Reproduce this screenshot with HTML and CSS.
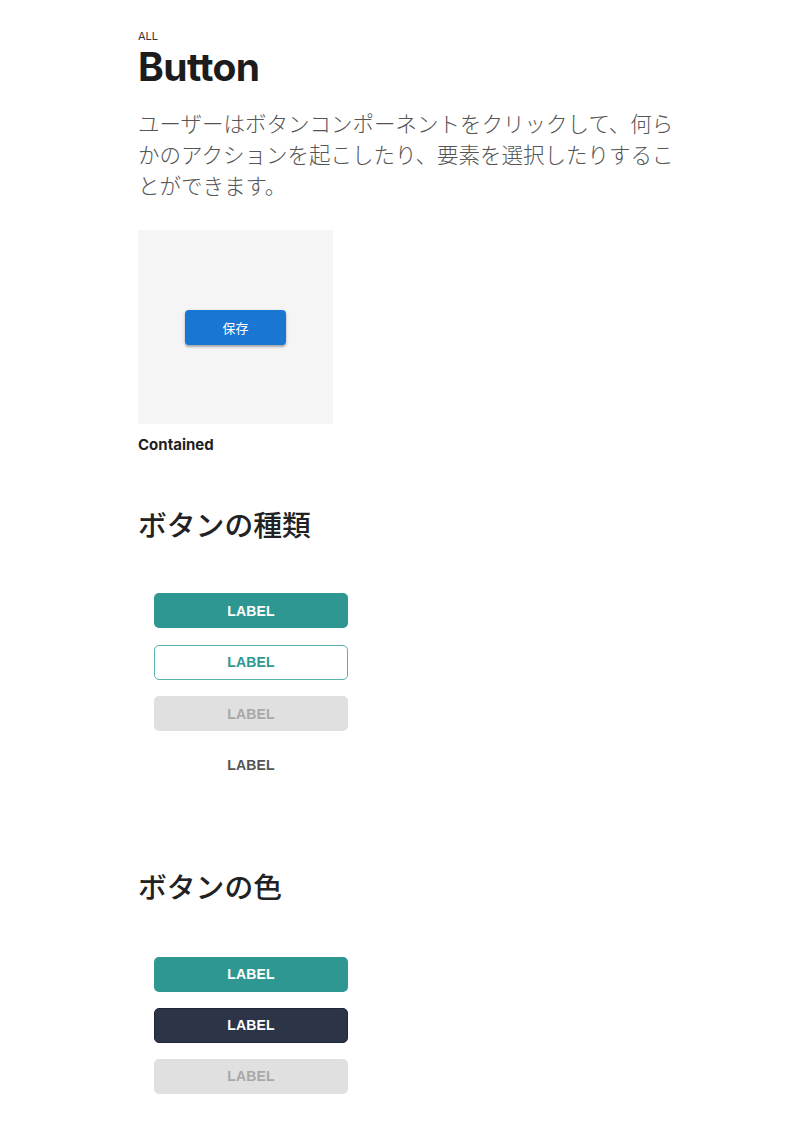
FILE: index.html
```html
<!DOCTYPE html>
<html lang="ja">
<head>
  <meta charset="UTF-8" />
  <meta name="viewport" content="width=device-width, initial-scale=1" />
  <title>Button</title>
  <link rel="stylesheet" href="styles.css">
</head>
<body>
  <div class="page">
    <div class="category">ALL</div>
    <h1 class="title">Button</h1>
    <p class="lead">ユーザーはボタンコンポーネントをクリックして、何らかのアクションを起こしたり、要素を選択したりすることができます。</p>

    <!-- プレビュー -->
    <div class="preview">
      <button class="btn-save">保存</button>
    </div>
    <div class="preview-label">Contained</div>

    <!-- ボタンの種類 -->
    <section class="section">
      <h2>ボタンの種類</h2>
      <div class="btn-list">
        <button class="btn btn-primary">LABEL</button>
        <button class="btn btn-outline">LABEL</button>
        <button class="btn btn-disabled">LABEL</button>
        <button class="btn btn-text">LABEL</button>
      </div>
    </section>

    <!-- ボタンの色 -->
    <section class="section section-colors">
      <h2>ボタンの色</h2>
      <div class="btn-list colors">
        <button class="btn btn-primary">LABEL</button>
        <button class="btn btn-dark">LABEL</button>
        <button class="btn btn-disabled">LABEL</button>
      </div>
    </section>
  </div>
</body>
</html>
```

FILE: styles.css
```css
* {
  box-sizing: border-box;
}
body {
  margin: 0;
  background: #ffffff;
  font-family: 'Inter', 'Noto Sans CJK JP', sans-serif;
  color: #1f1f1f;
}

.page {
  width: 540px;
  margin-left: 138px;
  padding-top: 29px;
}

.category {
  font-size: 11px;
  line-height: 14px;
  color: #333;
}

.title {
  margin: 0;
  font-size: 39px;
  line-height: 48px;
  font-weight: 700;
  letter-spacing: -0.6px;
  color: #1c1c1c;
}

.lead {
  margin: 16px 0 0;
  font-family: 'Noto Sans CJK JP', sans-serif;
  font-size: 21.5px;
  line-height: 31px;
  font-weight: 300;
  color: #555;
}

.preview {
  margin-top: 30px;
  width: 195px;
  height: 194px;
  background: #f5f5f5;
  display: flex;
  justify-content: center;
  align-items: center;
}

.btn-save {
  width: 101px;
  height: 35px;
  border: none;
  border-radius: 4px;
  background: #1976d2;
  color: #fff;
  font-family: 'Noto Sans CJK JP', sans-serif;
  font-size: 13px;
  box-shadow: 0 2px 2px rgba(0,0,0,0.25), 0 1px 4px rgba(0,0,0,0.12);
}

.preview-label {
  margin-top: 11px;
  font-size: 15px;
  line-height: 20px;
  font-weight: 700;
}

.section {
  margin-top: 49px;
}

.section-colors {
  margin-top: 67px;
}

.section h2 {
  margin: 0;
  font-family: 'Noto Sans CJK JP', sans-serif;
  font-size: 28.8px;
  line-height: 40px;
  font-weight: 500;
  color: #222;
}

.btn-list {
  margin-top: 33px;
  padding: 16px;
  display: flex;
  flex-direction: column;
  gap: 16.5px;
}

.btn-list.colors {
  margin-top: 35px;
  gap: 16px;
}

.btn {
  width: 194px;
  height: 35px;
  border-radius: 5px;
  border: none;
  font-family: 'Liberation Sans', Arial, sans-serif;
  font-size: 14px;
  font-weight: 700;
  letter-spacing: 0.2px;
}

.btn-primary {
  background: #2f9791;
  color: #fff;
}

.btn-outline {
  background: #fff;
  border: 1px solid #5db0ab;
  color: #2f9791;
}

.btn-disabled {
  background: #e0e0e0;
  color: #a8a8a8;
}

.btn-text {
  background: transparent;
  color: #555;
}

.btn-dark {
  background: #2c3547;
  color: #fff;
  border: 1px solid #1f2535;
}
```
